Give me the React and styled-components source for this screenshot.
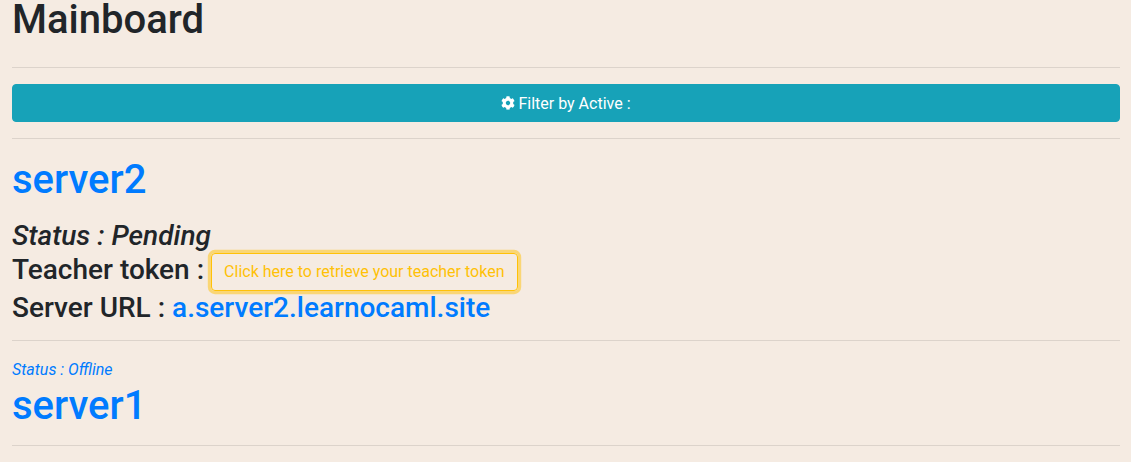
import React from "react";
import styled, { createGlobalStyle } from "styled-components";
import { FaCog } from "react-icons/fa";

const GlobalStyle = createGlobalStyle`
  *, *::before, *::after { box-sizing: border-box; }
  html { overflow: hidden; }
  body {
    margin: 0;
    background: #f5ebe2;
    color: #212529;
    font-family: Roboto, sans-serif;
    font-size: 16px;
    line-height: 1.5;
  }
`;

const Page = styled.main`
  display: flow-root;
  padding: 0 11px 0 12px;
`;

const Title = styled.h1`
  height: 48px;
  margin: 0 0 ${({ $gap = 16 }) => $gap}px;
  padding-top: 1px;
  font-size: 40px;
  font-weight: 500;
  line-height: 48px;
`;

const PageTitle = styled(Title)`
  margin: -5px 0 24px;
`;

const Divider = styled.hr`
  margin: 16px 0;
  border: 0;
  border-top: 1px solid rgba(0, 0, 0, 0.1);
`;

const FilterButton = styled.button`
  display: block;
  width: 100%;
  height: 38px;
  padding: 7px 12px 5px;
  border: 1px solid #17a2b8;
  border-radius: 4px;
  background: #17a2b8;
  color: #fff;
  font: 400 16px/24px Roboto, sans-serif;
  text-align: center;

  svg {
    width: 14px;
    height: 14px;
    margin: 0 -1px 0 0;
    vertical-align: -1px;
  }
`;

const Link = styled.a`
  color: #007bff;
  text-decoration: none;
`;

const Details = styled.h3`
  margin: 0 0 8px;
  font-size: 28px;
  font-weight: 500;
  line-height: 33.6px;
`;

const TokenButton = styled.button`
  height: 38px;
  padding: 6px 12.3px 6px 12.1px;
  border: 1px solid #ffc107;
  border-radius: 4px;
  background: transparent;
  box-shadow: 0 0 0 3.2px rgba(255, 193, 7, 0.5);
  color: #ffc107;
  font: 400 16px/24px Roboto, sans-serif;
  vertical-align: middle;
`;

const OfflineStatus = styled.em`
  display: block;
  height: 24px;
  padding-top: 1px;
  color: #007bff;
`;

export default function App() {
  return (
    <>
      <GlobalStyle />
      <Page>
        <PageTitle>Mainboard</PageTitle>
        <Divider />
        <FilterButton><FaCog /> Filter by Active :</FilterButton>
        <Divider />
        <Title><Link href="#">server2</Link></Title>
        <Details>
          <em>Status : Pending</em><br />
          Teacher token : <TokenButton>Click here to retrieve your teacher token</TokenButton><br />
          Server URL : <Link href="#">a.server2.learnocaml.site</Link>
        </Details>
        <Divider />
        <OfflineStatus>Status : Offline</OfflineStatus>
        <Title $gap={8}><Link href="#">server1</Link></Title>
        <Divider />
      </Page>
    </>
  );
}
